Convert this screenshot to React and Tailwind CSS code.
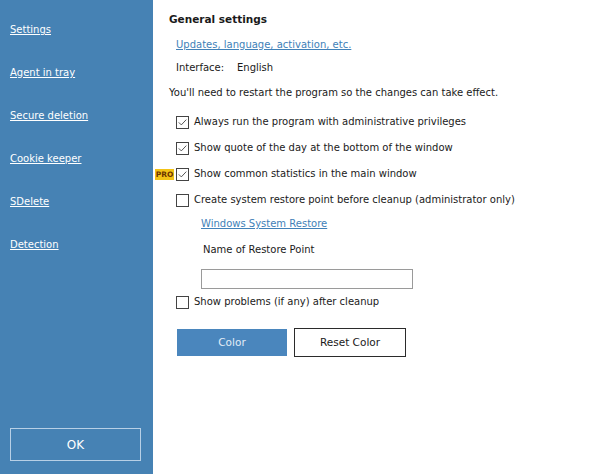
import React, { useState } from 'react';

const links = ['Settings', 'Agent in tray', 'Secure deletion', 'Cookie keeper', 'SDelete', 'Detection'];

function CheckBox({ checked, onChange }) {
  return (
    <span
      onClick={onChange}
      className="w-[13px] h-[13px] border border-[#444] bg-white flex items-center justify-center shrink-0 cursor-pointer"
    >
      {checked && (
        <svg width="11" height="11" viewBox="0 0 11 11">
          <path d="M1.8 5.4 L4.3 7.9 L9.3 2.6" fill="none" stroke="#444" strokeWidth="0.9" />
        </svg>
      )}
    </span>
  );
}

function Option({ label, checked, onChange, pro }) {
  return (
    <div className="relative flex items-center gap-[5px] h-[26px] pl-[7px]">
      {pro && (
        <span className="absolute -left-[14px] top-[8px] h-[11px] w-[19px] text-center bg-[#f3c316] text-[#6b3400] text-[7.5px] font-bold leading-[11px]">
          PRO
        </span>
      )}
      <CheckBox checked={checked} onChange={onChange} />
      <span className="leading-[16px]">{label}</span>
    </div>
  );
}

export default function App() {
  const [opts, setOpts] = useState({ admin: true, quote: true, stats: true, restore: false, problems: false });
  const [pointName, setPointName] = useState('');
  const toggle = (k) => setOpts((o) => ({ ...o, [k]: !o[k] }));

  return (
    <div
      className="w-[600px] h-[474px] flex bg-white text-[10px] text-[#1a1a1a]"
      style={{ fontFamily: '"DejaVu Sans", Tahoma, sans-serif' }}
    >
      {/* left navigation */}
      <aside className="w-[153px] shrink-0 bg-[#4682b4] flex flex-col justify-between pl-[10px] pr-[12px] pt-[22px] pb-[13px]">
        <nav className="flex flex-col gap-[27px]">
          {links.map((l) => (
            <a key={l} className="text-white underline leading-[16px] cursor-pointer">
              {l}
            </a>
          ))}
        </nav>
        <button className="h-[33px] w-[131px] border border-[#b8d0e6] text-white text-[12px]">OK</button>
      </aside>

      {/* settings page */}
      <main className="flex-1 pl-[16px] pt-[11px]">
        <div className="font-bold leading-[16px] text-[10.5px]">General settings</div>
        <a className="block w-fit mt-[10px] ml-[7px] text-[#4181b8] underline leading-[16px] cursor-pointer">
          Updates, language, activation, etc.
        </a>
        <div className="mt-[7px] ml-[7px] flex leading-[16px]">
          <span className="w-[61px]">Interface:</span>
          <span>English</span>
        </div>
        <div className="mt-[9px] leading-[16px]">You'll need to restart the program so the changes can take effect.</div>

        <div className="mt-[8px]">
          <Option label="Always run the program with administrative privileges" checked={opts.admin} onChange={() => toggle('admin')} />
          <Option label="Show quote of the day at the bottom of the window" checked={opts.quote} onChange={() => toggle('quote')} />
          <Option label="Show common statistics in the main window" checked={opts.stats} onChange={() => toggle('stats')} pro />
          <Option
            label="Create system restore point before cleanup (administrator only)"
            checked={opts.restore}
            onChange={() => toggle('restore')}
          />
        </div>

        <div className="pl-[32px]">
          <a className="block w-fit mt-[3px] text-[#4181b8] underline leading-[16px] cursor-pointer">Windows System Restore</a>
          <div className="mt-[10px] ml-[2px] leading-[16px]">Name of Restore Point</div>
          <input
            value={pointName}
            onChange={(e) => setPointName(e.target.value)}
            className="block mt-[11px] w-[212px] h-[20px] border border-[#9a9a9a] outline-none px-1"
          />
        </div>

        <Option label="Show problems (if any) after cleanup" checked={opts.problems} onChange={() => toggle('problems')} />

        <div className="mt-[13px] ml-[8px] flex items-center gap-[7px]">
          <button className="w-[110px] h-[27px] bg-[#4a86bd] text-[#e3edf7] text-[10.5px]">Color</button>
          <button className="w-[112px] h-[29px] border border-[#2b2b2b] bg-white text-[#1a1a1a] text-[10.5px]">
            Reset Color
          </button>
        </div>
      </main>
    </div>
  );
}
